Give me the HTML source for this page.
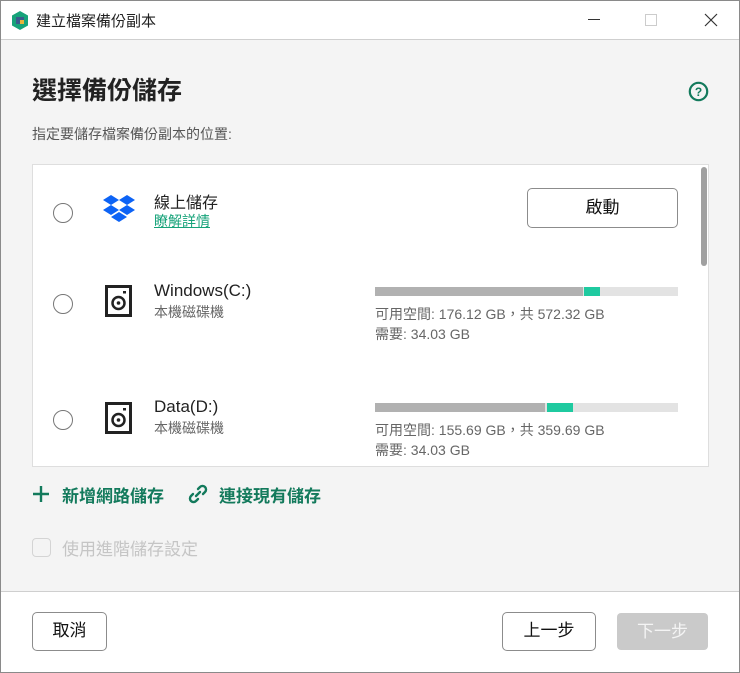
<!DOCTYPE html>
<html><head><meta charset="utf-8"><style>
*{margin:0;padding:0;box-sizing:border-box}
body{width:740px;height:673px;overflow:hidden;font-family:"Liberation Sans","Noto Sans CJK TC",sans-serif;background:#fff;position:relative;color:#222}
.a{position:absolute}
.win{position:absolute;left:0;top:0;width:740px;height:673px;border:1px solid #8a8a8a}
.tb{left:1px;top:1px;width:738px;height:39px;background:#fff;border-bottom:1px solid #cfcfcf}
.body{left:1px;top:40px;width:738px;height:551px;background:#f4f4f4}
.foot{left:1px;top:591px;width:738px;height:81px;background:#fff;border-top:1px solid #cfcfcf}
.list{left:32px;top:164px;width:677px;height:303px;background:#fff;border:1px solid #dedede}
.radio{width:20px;height:20px;border:1.5px solid #777;border-radius:50%;background:#fff}
.t{font-size:16px;color:#222;white-space:nowrap}
.s{font-size:14px;color:#666;white-space:nowrap}
.btn{border:1.5px solid #8c8c8c;border-radius:5px;background:#fff;font-size:17px;text-align:center;color:#111}
.bar{height:9px;background:#e3e3e3}
</style></head><body>
<div class="win"></div>
<div class="a tb">
 <svg class="a" style="left:10px;top:10px" width="18" height="19" viewBox="0 0 18 19"><path d="M9 0L17 4.5V14.5L9 19L1 14.5V4.5Z" fill="#17a37a"/><rect x="5" y="6" width="8" height="7" fill="#3a5b8c"/><rect x="9" y="9" width="4" height="4" fill="#e8b43a"/></svg>
 <div class="a t" style="left:35px;top:9px;font-size:15px">建立檔案備份副本</div>
 <div class="a" style="left:587px;top:18px;width:12px;height:1px;background:#333"></div>
 <div class="a" style="left:644px;top:13px;width:12px;height:12px;border:1px solid #ccc"></div>
 <svg class="a" style="left:703px;top:12px" width="14" height="14"><path d="M1 1L13 13M13 1L1 13" stroke="#333" stroke-width="1.2"/></svg>
</div>
<div class="a body"></div>
<div class="a" style="left:32px;top:71px;font-size:25px;font-weight:bold;color:#222">選擇備份儲存</div>
<svg class="a" style="left:688px;top:81px" width="21" height="21"><circle cx="10.5" cy="10.5" r="8.7" fill="none" stroke="#137a5c" stroke-width="2.2"/><text x="10.5" y="15" font-size="12" font-weight="bold" fill="#137a5c" text-anchor="middle" font-family="Liberation Sans">?</text></svg>
<div class="a s" style="left:32px;top:124px;color:#555">指定要儲存檔案備份副本的位置:</div>
<div class="a list"></div>
<div class="a" style="left:701px;top:167px;width:6px;height:99px;background:#a0a0a0;border-radius:3px"></div>
<div class="a radio" style="left:53px;top:203px"></div>
<svg class="a" style="left:103px;top:195px" width="32" height="28" viewBox="0 0 32 28"><g fill="#0d63f5"><path d="M8 0L16 5L8 10L0 5Z"/><path d="M24 0L32 5L24 10L16 5Z"/><path d="M8 10L16 15L8 20L0 15Z"/><path d="M24 10L32 15L24 20L16 15Z"/><path d="M16 17L24 22L16 27L8 22Z"/></g></svg>
<div class="a t" style="left:154px;top:189px">線上儲存</div>
<div class="a" style="left:154px;top:211px;font-size:14px;color:#17a37a;text-decoration:underline">瞭解詳情</div>
<div class="a btn" style="left:527px;top:188px;width:151px;height:40px;line-height:37px">啟動</div>
<div class="a radio" style="left:53px;top:294px"></div>
<svg class="a" style="left:105px;top:285px" width="27" height="32"><rect x="1.5" y="1.5" width="24" height="29" fill="none" stroke="#222" stroke-width="3"/><circle cx="13.5" cy="18" r="6" fill="none" stroke="#222" stroke-width="2.5"/><circle cx="13.5" cy="18" r="1.8" fill="#222"/><rect x="18" y="6" width="3" height="2.5" fill="#222"/></svg>
<div class="a t" style="left:154px;top:281px;font-size:17px">Windows(C:)</div>
<div class="a s" style="left:154px;top:302px">本機磁碟機</div>
<div class="a bar" style="left:375px;top:287px;width:303px"></div>
<div class="a" style="left:375px;top:287px;width:208px;height:9px;background:#b1b1b1"></div>
<div class="a" style="left:584px;top:287px;width:16px;height:9px;background:#1fcaa0"></div>
<div class="a s" style="left:375px;top:304px">可用空間: 176.12 GB，共 572.32 GB</div>
<div class="a s" style="left:375px;top:324px">需要: 34.03 GB</div>
<div class="a radio" style="left:53px;top:410px"></div>
<svg class="a" style="left:105px;top:402px" width="27" height="32"><rect x="1.5" y="1.5" width="24" height="29" fill="none" stroke="#222" stroke-width="3"/><circle cx="13.5" cy="18" r="6" fill="none" stroke="#222" stroke-width="2.5"/><circle cx="13.5" cy="18" r="1.8" fill="#222"/><rect x="18" y="6" width="3" height="2.5" fill="#222"/></svg>
<div class="a t" style="left:154px;top:397px;font-size:17px">Data(D:)</div>
<div class="a s" style="left:154px;top:418px">本機磁碟機</div>
<div class="a bar" style="left:375px;top:403px;width:303px"></div>
<div class="a" style="left:375px;top:403px;width:170px;height:9px;background:#b1b1b1"></div>
<div class="a" style="left:547px;top:403px;width:26px;height:9px;background:#1fcaa0"></div>
<div class="a s" style="left:375px;top:420px">可用空間: 155.69 GB，共 359.69 GB</div>
<div class="a s" style="left:375px;top:440px">需要: 34.03 GB</div>
<svg class="a" style="left:32px;top:485px" width="18" height="18"><path d="M9 1V17M1 9H17" stroke="#137a5c" stroke-width="2.4"/></svg>
<div class="a t" style="left:62px;top:482px;color:#137a5c;font-weight:bold;font-size:17px">新增網路儲存</div>
<svg class="a" style="left:187px;top:483px" width="22" height="22" viewBox="0 0 22 22"><g fill="none" stroke="#137a5c" stroke-width="2.4" stroke-linecap="round"><path d="M9 13L13 9"/><path d="M11 6L13 4A3.5 3.5 0 0 1 18 9L16 11"/><path d="M11 16L9 18A3.5 3.5 0 0 1 4 13L6 11"/></g></svg>
<div class="a t" style="left:219px;top:482px;color:#137a5c;font-weight:bold;font-size:17px">連接現有儲存</div>
<div class="a" style="left:32px;top:538px;width:19px;height:19px;border:1.5px solid #d4d4d4;border-radius:4px"></div>
<div class="a t" style="left:62px;top:535px;color:#c5c5c5;font-size:17px">使用進階儲存設定</div>
<div class="a foot"></div>
<div class="a btn" style="left:32px;top:612px;width:75px;height:39px;line-height:36px">取消</div>
<div class="a btn" style="left:502px;top:612px;width:94px;height:39px;line-height:36px">上一步</div>
<div class="a" style="left:617px;top:613px;width:91px;height:37px;line-height:37px;background:#cacaca;border-radius:4px;color:#f4f4f4;font-size:17px;text-align:center">下一步</div>
</body></html>
